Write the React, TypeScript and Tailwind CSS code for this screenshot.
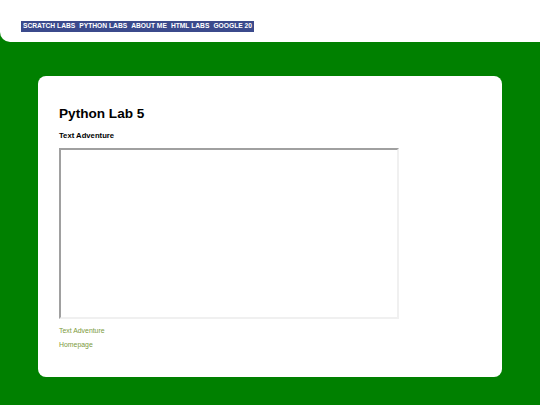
import React from "react";

const navItems = ["SCRATCH LABS", "PYTHON LABS", "ABOUT ME", "HTML LABS", "GOOGLE 20"];

export default function App() {
  return (
    <div className="min-h-[405px] w-[540px] bg-[#008000] font-['Liberation_Sans',Arial,sans-serif] overflow-hidden">
      <header className="h-[42px] bg-white rounded-bl-[10px] pt-[21px] pl-[21px]">
        <nav className="flex w-fit h-[11px] items-center gap-[4px] bg-[#3b4a8c] px-[2px]">
          {navItems.map((item) => (
            <a
              key={item}
              href="#"
              className="text-[6.7px] font-bold leading-none text-white"
            >
              {item}
            </a>
          ))}
        </nav>
      </header>

      <main className="mx-[38px] mt-[34px] mb-[28px] rounded-[8px] bg-white pl-[21px] pt-[31px] pb-[28px]">
        <h1 className="text-[13.6px] font-bold leading-none text-black">Python Lab 5</h1>
        <h2 className="mt-[11px] text-[7.7px] font-bold leading-none text-black">Text Adventure</h2>
        <div className="mt-[9px] h-[171px] w-[340px] border-2 border-t-[#a0a0a0] border-l-[#a0a0a0] border-b-[#f0f0f0] border-r-[#f0f0f0] bg-white" />
        <div className="mt-[9px] flex flex-col gap-[7px]">
          <a href="#" className="text-[6.9px] leading-none text-[#7c9a3b]">
            Text Adventure
          </a>
          <a href="#" className="text-[6.9px] leading-none text-[#7c9a3b]">
            Homepage
          </a>
        </div>
      </main>
    </div>
  );
}
